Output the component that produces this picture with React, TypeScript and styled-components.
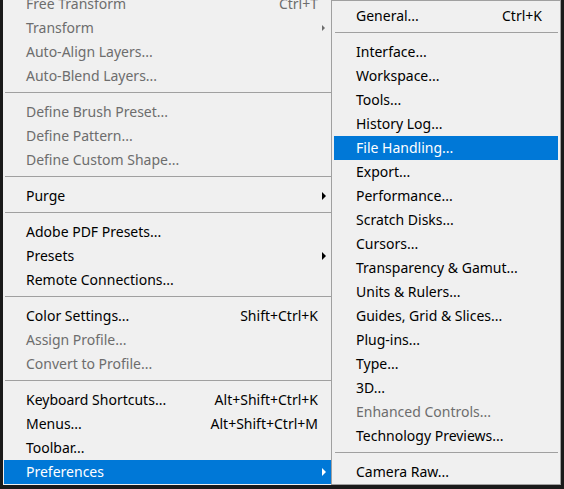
import styled, { createGlobalStyle } from "styled-components";

const GlobalStyle = createGlobalStyle`
  html, body {
    margin: 0;
    padding: 0;
    background: #1a1a1a;
    overflow: hidden;
  }
  body {
    font-family: "Noto Sans", "Open Sans", sans-serif;
  }
`;

type Entry =
    | { sep: true }
    | { label: string; shortcut?: string; arrow?: boolean; disabled?: boolean; active?: boolean };

const editMenu: Entry[] = [
    { label: "Free Transform", shortcut: "Ctrl+T", disabled: true },
    { label: "Transform", arrow: true, disabled: true },
    { label: "Auto-Align Layers...", disabled: true },
    { label: "Auto-Blend Layers...", disabled: true },
    { sep: true },
    { label: "Define Brush Preset...", disabled: true },
    { label: "Define Pattern...", disabled: true },
    { label: "Define Custom Shape...", disabled: true },
    { sep: true },
    { label: "Purge", arrow: true },
    { sep: true },
    { label: "Adobe PDF Presets..." },
    { label: "Presets", arrow: true },
    { label: "Remote Connections..." },
    { sep: true },
    { label: "Color Settings...", shortcut: "Shift+Ctrl+K" },
    { label: "Assign Profile...", disabled: true },
    { label: "Convert to Profile...", disabled: true },
    { sep: true },
    { label: "Keyboard Shortcuts...", shortcut: "Alt+Shift+Ctrl+K" },
    { label: "Menus...", shortcut: "Alt+Shift+Ctrl+M" },
    { label: "Toolbar..." },
    { label: "Preferences", arrow: true, active: true },
];

const prefsMenu: Entry[] = [
    { label: "General...", shortcut: "Ctrl+K" },
    { sep: true },
    { label: "Interface..." },
    { label: "Workspace..." },
    { label: "Tools..." },
    { label: "History Log..." },
    { label: "File Handling...", active: true },
    { label: "Export..." },
    { label: "Performance..." },
    { label: "Scratch Disks..." },
    { label: "Cursors..." },
    { label: "Transparency & Gamut..." },
    { label: "Units & Rulers..." },
    { label: "Guides, Grid & Slices..." },
    { label: "Plug-ins..." },
    { label: "Type..." },
    { label: "3D..." },
    { label: "Enhanced Controls...", disabled: true },
    { label: "Technology Previews..." },
    { sep: true },
    { label: "Camera Raw..." },
];

const MenuList = ({ items, side }: { items: Entry[]; side: number }) => (
    <>
        {items.map((it, i) =>
            "sep" in it ? (
                <Separator key={i} />
            ) : (
                <Item key={i} $disabled={it.disabled} $active={it.active} $side={side}>
                    <Label>{it.label}</Label>
                    <Shortcut>{it.shortcut}</Shortcut>
                    <ArrowCell>{it.arrow && <Arrow $small={it.disabled} />}</ArrowCell>
                </Item>
            )
        )}
    </>
);

const App = () => {
    return (
        <>
            <GlobalStyle />
            <Screen>
                <MainMenu>
                    <MenuList items={editMenu} side={13} />
                </MainMenu>
                <SubMenu>
                    <MenuList items={prefsMenu} side={16} />
                </SubMenu>
            </Screen>
        </>
    );
};

const Screen = styled.div`
  display: flex;
  align-items: flex-start;
  padding-left: 3px;
`;

const MainMenu = styled.div`
  width: 327px;
  margin-top: -8px;
  padding: 0 1px 1px 1px;
  background: #f0f0f0;
  display: flex;
  flex-direction: column;
`;

const SubMenu = styled.div`
  width: 224px;
  margin-left: -1px;
  padding: 3px 2px 0 2px;
  border: 1px solid #a0a0a0;
  background: #f0f0f0;
  display: flex;
  flex-direction: column;
`;

const Item = styled.div<{ $disabled?: boolean; $active?: boolean; $side: number }>`
  height: 24px;
  display: grid;
  grid-template-columns: 1fr auto ${(p) => p.$side}px;
  align-items: center;
  padding-left: 22px;
  font-size: 14px;
  line-height: 22px;
  background: ${(p) => (p.$active ? "#0078d7" : "transparent")};
  color: ${(p) => (p.$active ? "#ffffff" : p.$disabled ? "#6d6d6d" : "#000000")};
  white-space: nowrap;
`;

const Label = styled.span``;

const Shortcut = styled.span`
  text-align: right;
`;

const ArrowCell = styled.span`
  display: flex;
  align-items: center;
  padding-left: 4px;
`;

const Arrow = styled.span<{ $small?: boolean }>`
  width: 0;
  height: 0;
  border-top: ${(p) => (p.$small ? 3 : 4)}px solid transparent;
  border-bottom: ${(p) => (p.$small ? 3 : 4)}px solid transparent;
  border-left: ${(p) => (p.$small ? 3 : 4)}px solid currentColor;
`;

const Separator = styled.div`
  height: 12px;
  display: flex;
  flex-direction: column;
  &::after {
    content: "";
    margin: 4px 0 0 1px;
    border-top: 1px solid #a0a0a0;
  }
`;

export default App;
